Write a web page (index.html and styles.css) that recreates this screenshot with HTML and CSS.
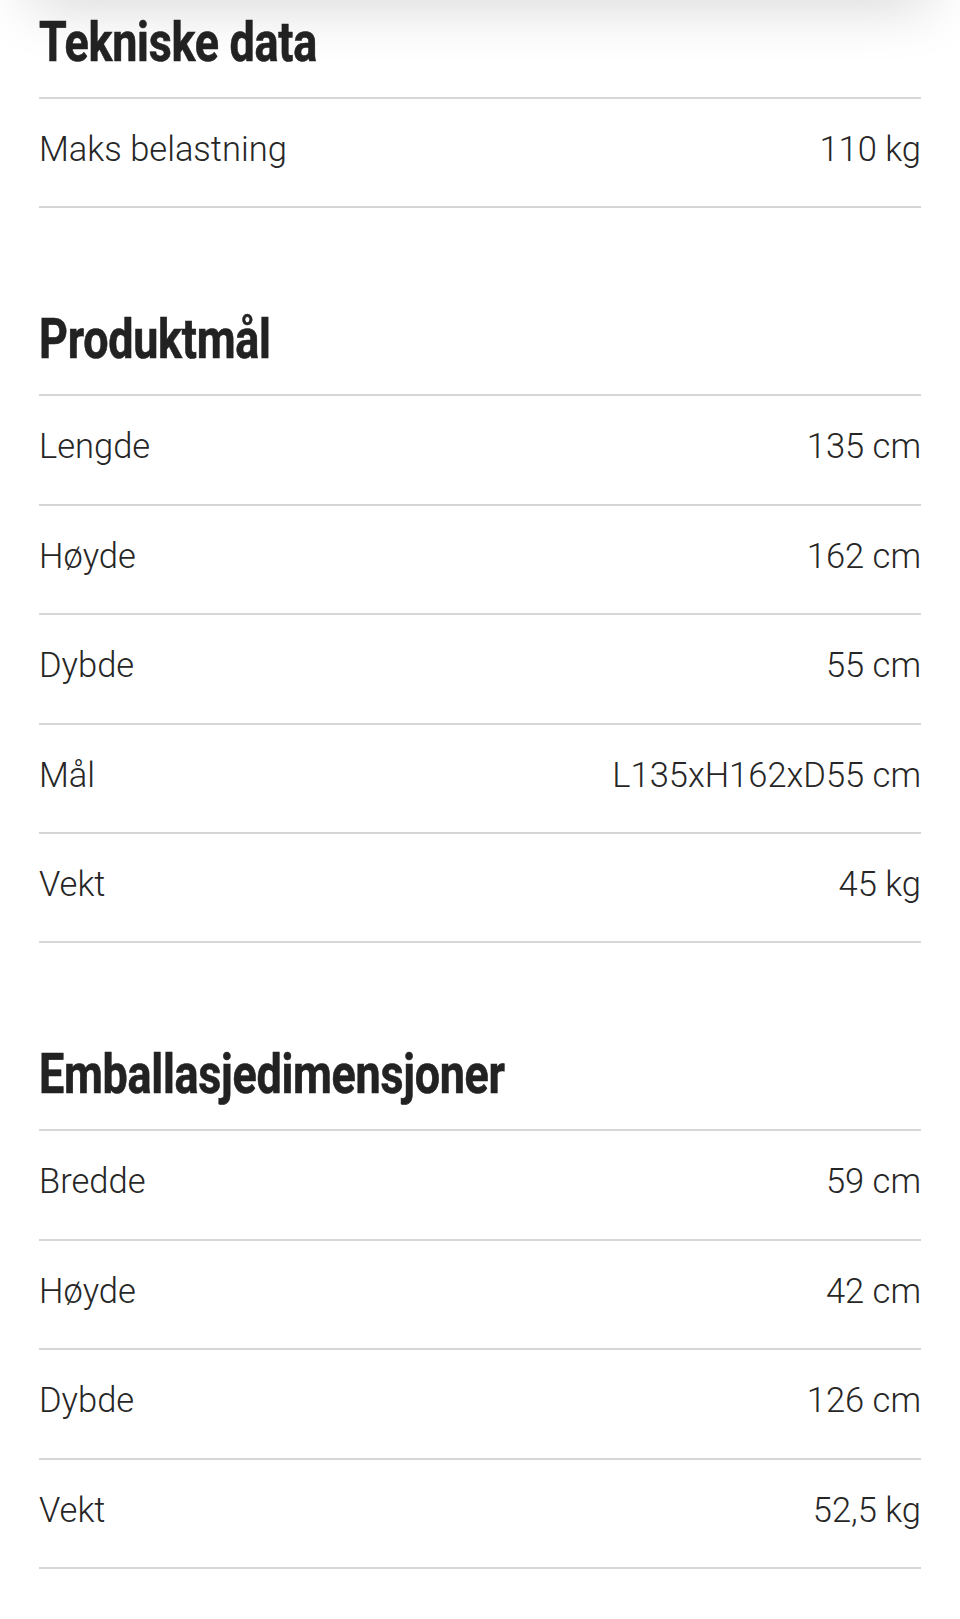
FILE: index.html
```html
<!DOCTYPE html>
<html lang="no">
<head>
    <meta charset="UTF-8">
    <meta name="viewport" content="width=device-width, initial-scale=1.0">
    <title>Tekniske data</title>
    <link rel="stylesheet" href="styles.css">
</head>
<body>
    <div class="top-shade"></div>

    <div class="specs">
        <!-- Tekniske data -->
        <section class="spec-group">
            <h2><span>Tekniske data</span></h2>
            <ul class="spec-list">
                <li><span>Maks belastning</span><span>110 kg</span></li>
            </ul>
        </section>

        <!-- Produktmål -->
        <section class="spec-group">
            <h2><span>Produktmål</span></h2>
            <ul class="spec-list">
                <li><span>Lengde</span><span>135 cm</span></li>
                <li><span>Høyde</span><span>162 cm</span></li>
                <li><span>Dybde</span><span>55 cm</span></li>
                <li><span>Mål</span><span>L135xH162xD55 cm</span></li>
                <li><span>Vekt</span><span>45 kg</span></li>
            </ul>
        </section>

        <!-- Emballasjedimensjoner -->
        <section class="spec-group">
            <h2><span>Emballasjedimensjoner</span></h2>
            <ul class="spec-list">
                <li><span>Bredde</span><span>59 cm</span></li>
                <li><span>Høyde</span><span>42 cm</span></li>
                <li><span>Dybde</span><span>126 cm</span></li>
                <li><span>Vekt</span><span>52,5 kg</span></li>
            </ul>
        </section>
    </div>
</body>
</html>
```

FILE: styles.css
```css
* {
    margin: 0;
    padding: 0;
    box-sizing: border-box;
}
body {
    background-color: #fff;
    font-family: Roboto, "Liberation Sans", sans-serif;
    font-weight: 300;
    color: #262626;
}
.top-shade {
    position: fixed;
    top: -40px;
    left: 30px;
    right: 30px;
    height: 40px;
    background: #fff;
    box-shadow: 0 0 60px rgba(0, 0, 0, 0.22);
}
.specs {
    padding: 15px 39px 60px;
}
.spec-group + .spec-group {
    margin-top: 104px;
}
h2 {
    font-family: Roboto, "Liberation Sans", sans-serif;
    font-weight: 700;
    font-size: 55px;
    line-height: 54px;
    letter-spacing: -0.3px;
    color: #222;
    margin-bottom: 28px;
    white-space: nowrap;
}
/* condensed headline face */
h2 span {
    display: inline-block;
    transform: scaleX(0.815);
    transform-origin: left center;
    -webkit-text-stroke: 0.6px #222;
}
.spec-list {
    list-style: none;
    border-top: 2px solid #d6d6d6;
}
.spec-list li {
    display: flex;
    justify-content: space-between;
    font-size: 34.5px;
    line-height: 41px;
    padding: 30px 0 36.4px;
    border-bottom: 2px solid #d6d6d6;
}
```
